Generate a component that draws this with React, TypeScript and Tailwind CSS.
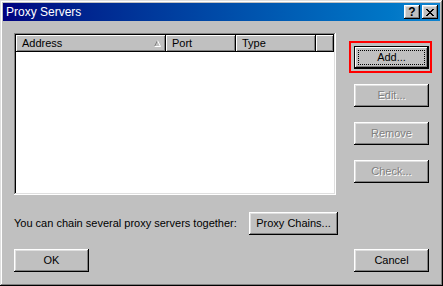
import React from "react";

const raised =
  "bg-[#c0c0c0] shadow-[inset_-1px_-1px_#000000,inset_1px_1px_#ffffff,inset_-2px_-2px_#808080,inset_2px_2px_#dfdfdf]";

function Btn({
  label,
  disabled,
  className = "",
}: {
  label: string;
  disabled?: boolean;
  className?: string;
}) {
  return (
    <div
      className={`${raised} h-[23px] flex items-center justify-center ${
        disabled ? "text-[#808080] [text-shadow:1px_1px_0_#ffffff]" : "text-black"
      } ${className}`}
    >
      {label}
    </div>
  );
}

function HeaderCell({ label, w, sort }: { label: string; w: string; sort?: boolean }) {
  return (
    <div
      className={`${w} h-[17px] shrink-0 flex items-center justify-between pl-[6px] pr-[5px] bg-[#c0c0c0] shadow-[inset_-1px_-1px_#000000,inset_1px_1px_#ffffff,inset_-2px_-2px_#808080]`}
    >
      <span>{label}</span>
      {sort && (
        <svg width="7" height="7" viewBox="0 0 7 7" className="mb-[1px]">
          <path d="M3.5 0.5 L0.5 6.5" stroke="#808080" strokeWidth="1" fill="none" />
          <path d="M3.5 0.5 L6.5 6.5 M0.5 6.5 H6.5" stroke="#ffffff" strokeWidth="1" fill="none" />
        </svg>
      )}
    </div>
  );
}

export default function App() {
  return (
    <div
      className="w-[443px] h-[286px] bg-[#c0c0c0] p-[3px] flex flex-col text-[11px] leading-none text-black shadow-[inset_-1px_-1px_#000000,inset_1px_1px_#dfdfdf,inset_-2px_-2px_#808080,inset_2px_2px_#ffffff]"
      style={{ fontFamily: '"Liberation Sans", Arial, sans-serif' }}
    >
      {/* title bar */}
      <div className="h-[18px] flex items-center justify-between pl-[3px] pr-[2px] bg-gradient-to-r from-[#000080] to-[#1084d0]">
        <span className="text-white text-[12px]">Proxy Servers</span>
        <div className="flex gap-[2px]">
          <div className={`${raised} w-[16px] h-[14px] flex items-center justify-center font-bold text-[12px]`}>
            ?
          </div>
          <div className={`${raised} w-[16px] h-[14px] flex items-center justify-center`}>
            <svg width="8" height="7" viewBox="0 0 8 7">
              <path
                d="M0 0h2v1h1v1h2V1h1V0h2v1H7v1H6v1H5v1h1v1h1v1h1v1H6V6H5V5H3v1H2v1H0V6h1V5h1V4h1V3H2V2H1V1H0z"
                fill="#000"
              />
            </svg>
          </div>
        </div>
      </div>

      {/* body */}
      <div className="flex flex-col pt-[12px] px-[11px]">
        <div className="flex items-start">
          <div className="w-[322px] h-[162px] bg-white shadow-[inset_-1px_-1px_#ffffff,inset_1px_1px_#808080,inset_-2px_-2px_#dfdfdf,inset_2px_2px_#000000] p-[2px]">
            <div className="flex">
              <HeaderCell label="Address" w="w-[150px]" sort />
              <HeaderCell label="Port" w="w-[70px]" />
              <HeaderCell label="Type" w="w-[80px]" />
              <HeaderCell label="" w="w-[18px]" />
            </div>
          </div>

          <div className="ml-[18px] pt-[13px] flex flex-col gap-[15px] w-[75px]">
            <div className="relative">
              <div className="absolute left-[-5px] top-[-5px] w-[83px] h-[32px] border-2 border-[#ff0000]" />
              <div className="bg-black p-[1px] h-[23px]">
                <div className="relative h-full flex items-center justify-center bg-[#c0c0c0] shadow-[inset_-1px_-1px_#000000,inset_1px_1px_#ffffff,inset_-2px_-2px_#808080]">
                  <div className="absolute left-[3px] right-[3px] top-[3px] bottom-[3px] border border-dotted border-black" />
                  <span>Add...</span>
                </div>
              </div>
            </div>
            <Btn label="Edit..." disabled />
            <Btn label="Remove" disabled />
            <Btn label="Check..." disabled />
          </div>
        </div>

        <div className="flex items-center mt-[17px]">
          <span className="w-[235px]">You can chain several proxy servers together:</span>
          <Btn label="Proxy Chains..." className="w-[89px]" />
        </div>

        <div className="flex justify-between mt-[14px]">
          <Btn label="OK" className="w-[75px]" />
          <Btn label="Cancel" className="w-[75px]" />
        </div>
      </div>
    </div>
  );
}
